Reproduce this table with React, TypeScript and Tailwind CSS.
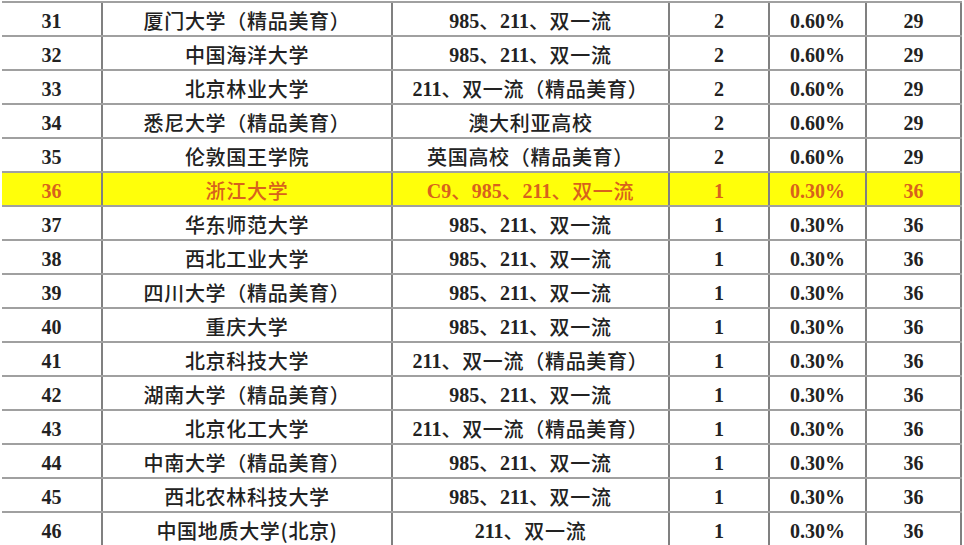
import React from "react";

type Row = [string, string, string, string, string, string];

const rows: Row[] = [
  ["31", "厦门大学（精品美育）", "985、211、双一流", "2", "0.60%", "29"],
  ["32", "中国海洋大学", "985、211、双一流", "2", "0.60%", "29"],
  ["33", "北京林业大学", "211、双一流（精品美育）", "2", "0.60%", "29"],
  ["34", "悉尼大学（精品美育）", "澳大利亚高校", "2", "0.60%", "29"],
  ["35", "伦敦国王学院", "英国高校（精品美育）", "2", "0.60%", "29"],
  ["36", "浙江大学", "C9、985、211、双一流", "1", "0.30%", "36"],
  ["37", "华东师范大学", "985、211、双一流", "1", "0.30%", "36"],
  ["38", "西北工业大学", "985、211、双一流", "1", "0.30%", "36"],
  ["39", "四川大学（精品美育）", "985、211、双一流", "1", "0.30%", "36"],
  ["40", "重庆大学", "985、211、双一流", "1", "0.30%", "36"],
  ["41", "北京科技大学", "211、双一流（精品美育）", "1", "0.30%", "36"],
  ["42", "湖南大学（精品美育）", "985、211、双一流", "1", "0.30%", "36"],
  ["43", "北京化工大学", "211、双一流（精品美育）", "1", "0.30%", "36"],
  ["44", "中南大学（精品美育）", "985、211、双一流", "1", "0.30%", "36"],
  ["45", "西北农林科技大学", "985、211、双一流", "1", "0.30%", "36"],
  ["46", "中国地质大学(北京)", "211、双一流", "1", "0.30%", "36"],
];

function Mixed({ text }: { text: string }) {
  const parts = text.split(/([A-Za-z0-9.%]+)/).filter((p) => p.length > 0);
  return (
    <>
      {parts.map((p, i) =>
        /^[A-Za-z0-9.%]+$/.test(p) ? (
          <span key={i} className="font-bold [font-family:'Liberation_Serif',serif]">
            {p}
          </span>
        ) : (
          <span key={i} className="font-medium tracking-[0.7px] [font-family:'Noto_Sans_CJK_SC','Noto_Sans',sans-serif]">
            {p}
          </span>
        )
      )}
    </>
  );
}

const widths = ["w-[99px]", "w-[290px]", "w-[277px]", "w-[100px]", "w-[97px]", "w-[97px]"];

export default function App() {
  return (
    <div className="w-[964px] h-[545px] overflow-hidden bg-white">
      <div className="ml-[2px] mt-[1px] w-[960px] border-t-2 border-[#a0a0a0]">
        {rows.map((r, ri) => {
          const hl = r[0] === "36";
          return (
            <div
              key={ri}
              className={`flex h-[34px] border-b-2 border-[#a0a0a0] ${hl ? "bg-[#ffff0a] text-[#d8621c]" : "bg-white text-[#222222]"}`}
            >
              {r.map((c, ci) => (
                <div
                  key={ci}
                  className={`${widths[ci]} shrink-0 flex items-center justify-center pt-[3px] text-[20px] leading-none whitespace-nowrap ${ci > 0 ? "border-l-2 border-[#808080]" : ""} ${ci === 5 ? "border-r-2 border-[#808080]" : ""}`}
                >
                  <Mixed text={c} />
                </div>
              ))}
            </div>
          );
        })}
      </div>
    </div>
  );
}
